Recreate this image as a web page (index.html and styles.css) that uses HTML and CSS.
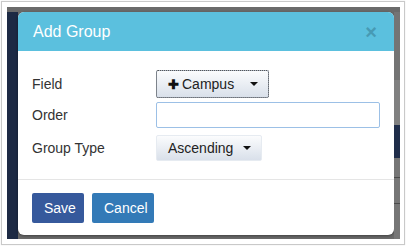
FILE: index.html
```html
<!DOCTYPE html>
<html lang="en">
<head>
    <meta charset="UTF-8">
    <title>Add Group</title>
    <link rel="stylesheet" href="styles.css">
</head>
<body>

    <div class="frame">
        <div class="backdrop">
            <div class="side-left"></div>

            <div class="modal">
                <div class="modal-header">
                    <h4 class="modal-title">Add Group</h4>
                    <span class="close">&times;</span>
                </div>

                <div class="modal-body">
                    <label class="field-label">Field</label>
                    <div>
                        <button class="dropdown-btn focused">
                            <span class="plus">&#10010;</span> Campus
                            <span class="caret"></span>
                        </button>
                    </div>

                    <label class="field-label">Order</label>
                    <div>
                        <input class="text-input" type="text">
                    </div>

                    <label class="field-label">Group Type</label>
                    <div>
                        <button class="dropdown-btn plain">
                            Ascending
                            <span class="caret"></span>
                        </button>
                    </div>
                </div>

                <div class="modal-footer">
                    <button class="btn btn-save">Save</button>
                    <button class="btn btn-cancel">Cancel</button>
                </div>
            </div>

            <div class="side-right"></div>
        </div>
    </div>

</body>
</html>
```

FILE: styles.css
```css
html, body {
    margin: 0;
    padding: 0;
    background-color: #fff;
}
body {
    font-family: "Liberation Sans", Arial, sans-serif;
    padding: 1px;
}
.frame {
    width: 404px;
    height: 244px;
    border: 1px solid #c9c9c9;
    padding: 5px 4px 6px 5px;
    box-sizing: border-box;
    box-shadow: 0 0 1px #ddd;
}
.backdrop {
    display: flex;
    height: 232px;
    padding: 5px 0 4px 0;
    box-sizing: border-box;
    background-color: #6a6a6a;
}
.side-left {
    width: 11px;
    margin-bottom: -4px;
    background-color: #1d2a44;
}
.side-right {
    flex: 1;
    margin-bottom: -4px;
    background: linear-gradient(to bottom,
        #747474 0, #747474 68px,
        #808080 68px, #808080 113px,
        #1f2d4a 113px, #1f2d4a 146px,
        #767676 146px, #767676 165px,
        #4a4a4a 165px, #4a4a4a 166px,
        #767676 166px, #767676 191px,
        #4a4a4a 191px, #4a4a4a 192px,
        #767676 192px);
}
.modal {
    width: 376px;
    background-color: #fff;
    border-radius: 6px;
    overflow: hidden;
    box-shadow: 0 1px 3px rgba(0, 0, 0, 0.4);
}
.modal-header {
    display: flex;
    align-items: center;
    justify-content: space-between;
    height: 39px;
    padding: 0 17px 0 15px;
    background-color: #5bc0de;
}
.modal-title {
    margin: 0;
    font-size: 16px;
    font-weight: normal;
    color: #fff;
}
.close {
    font-size: 20px;
    font-weight: bold;
    color: #3f8ba3;
    opacity: 0.7;
    line-height: 1;
}
.modal-body {
    display: grid;
    grid-template-columns: 124px 1fr;
    align-items: center;
    row-gap: 4px;
    padding: 19px 13px 18px 14px;
}
.modal-body > div:nth-child(6) {
    margin-top: 3px;
}
.modal-body label:nth-of-type(3) {
    margin-top: 3px;
}
.field-label {
    font-size: 14px;
    color: #333;
}
.dropdown-btn {
    display: inline-flex;
    align-items: center;
    height: 28px;
    padding: 0 10px 0 11px;
    font-family: "Liberation Sans", Arial, sans-serif;
    font-size: 14px;
    color: #222;
    background: linear-gradient(to bottom, #fbfcfd, #d9e0ea);
    border: 1px solid #cfd6df;
    border-radius: 2px;
}
.dropdown-btn.focused {
    width: 113px;
    outline: 1px dotted #555;
    outline-offset: -1px;
    border-color: #a7b2c2;
}
.dropdown-btn.plain {
    width: 106px;
    height: 26px;
    border-color: #e6ebf1;
}
.plus {
    font-size: 13px;
    font-weight: bold;
    margin-right: 3px;
    color: #111;
}
.caret {
    margin-left: auto;
    width: 0;
    height: 0;
    border-left: 4px solid transparent;
    border-right: 4px solid transparent;
    border-top: 4px solid #111;
}
.text-input {
    display: block;
    width: 224px;
    height: 26px;
    box-sizing: border-box;
    border: 1px solid #9cc0e6;
    border-radius: 2px;
    padding: 4px 6px;
}
.modal-footer {
    display: flex;
    gap: 8px;
    padding: 13px 14px 12px 14px;
    border-top: 1px solid #e5e5e5;
}
.btn {
    height: 30px;
    padding: 0 12px;
    font-family: "Liberation Sans", Arial, sans-serif;
    font-size: 14px;
    color: #fff;
    border: none;
    border-radius: 2px;
}
.btn-save {
    width: 52px;
    background-color: #36599c;
}
.btn-cancel {
    width: 62px;
    background-color: #337ab7;
}
```
